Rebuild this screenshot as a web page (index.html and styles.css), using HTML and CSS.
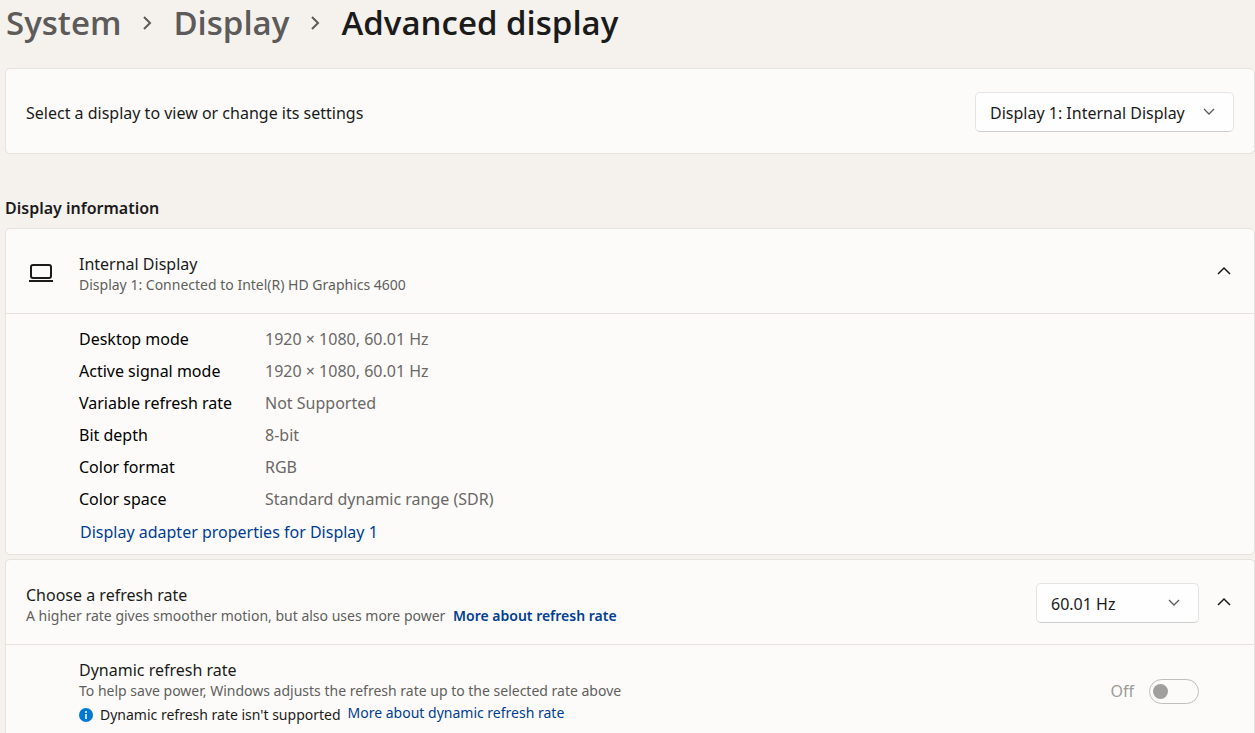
FILE: index.html
```html
<!DOCTYPE html>
<html lang="en">
<head>
  <meta charset="UTF-8">
  <meta name="viewport" content="width=device-width, initial-scale=1.0">
  <title>Advanced display</title>
  <link rel="stylesheet" href="styles.css">
</head>
<body>
  <nav class="breadcrumb" aria-label="Breadcrumb">
    <a href="#system">System</a>
    <svg class="crumb-arrow" viewBox="0 0 10 16"><path d="M2 2l6 6-6 6"/></svg>
    <a href="#display">Display</a>
    <svg class="crumb-arrow" viewBox="0 0 10 16"><path d="M2 2l6 6-6 6"/></svg>
    <h1>Advanced display</h1>
  </nav>

  <main>
    <section class="card">
      <div class="card-header picker">
        <label class="title" for="display">Select a display to view or change its settings</label>
        <div class="select-box">
          <select id="display">
            <option>Display 1: Internal Display</option>
          </select>
          <svg class="select-arrow" viewBox="0 0 12 12"><path d="M1 4l5 5 5-5"/></svg>
        </div>
      </div>
    </section>

    <h2>Display information</h2>

    <section class="card">
      <div class="card-header">
        <svg class="laptop" viewBox="0 0 26 20">
          <rect x="3" y="2" width="20" height="13" rx="2"/>
          <path d="M1 18h24"/>
        </svg>
        <div class="text">
          <p class="title">Internal Display</p>
          <p class="note">Display 1: Connected to Intel(R) HD Graphics 4600</p>
        </div>
        <button class="expander" aria-label="Collapse display details">
          <svg viewBox="0 0 16 16"><path d="M2 11l6-6 6 6"/></svg>
        </button>
      </div>
      <div class="card-body">
        <table class="info">
          <tr><th scope="row">Desktop mode</th><td>1920 × 1080, 60.01 Hz</td></tr>
          <tr><th scope="row">Active signal mode</th><td>1920 × 1080, 60.01 Hz</td></tr>
          <tr><th scope="row">Variable refresh rate</th><td>Not Supported</td></tr>
          <tr><th scope="row">Bit depth</th><td>8-bit</td></tr>
          <tr><th scope="row">Color format</th><td>RGB</td></tr>
          <tr><th scope="row">Color space</th><td>Standard dynamic range (SDR)</td></tr>
        </table>
        <a class="adapter-link" href="#adapter">Display adapter properties for Display 1</a>
      </div>
    </section>

    <section class="card">
      <div class="card-header">
        <div class="text">
          <label class="title" for="rate">Choose a refresh rate</label>
          <p class="note">A higher rate gives smoother motion, but also uses more power <a class="strong-link" href="#refresh-rate">More about refresh rate</a></p>
        </div>
        <div class="select-box rate">
          <select id="rate">
            <option>60.01 Hz</option>
          </select>
          <svg class="select-arrow" viewBox="0 0 12 12"><path d="M1 4l5 5 5-5"/></svg>
        </div>
        <button class="expander" aria-label="Collapse refresh rate options">
          <svg viewBox="0 0 16 16"><path d="M2 11l6-6 6 6"/></svg>
        </button>
      </div>
      <div class="card-body dynamic">
        <div class="text">
          <label class="title" for="dynamic-rate">Dynamic refresh rate</label>
          <p class="note">To help save power, Windows adjusts the refresh rate up to the selected rate above</p>
          <p class="status">
            <svg class="info-icon" viewBox="0 0 14 14">
              <circle cx="7" cy="7" r="7"/>
              <path d="M7 3v2M7 6v5"/>
            </svg>
            <span>Dynamic refresh rate isn't supported</span>
            <a href="#dynamic">More about dynamic refresh rate</a>
          </p>
        </div>
        <div class="switch">
          <span>Off</span>
          <input class="toggle" type="checkbox" role="switch" id="dynamic-rate" disabled>
        </div>
      </div>
    </section>
  </main>
</body>
</html>
```

FILE: styles.css
```css
* {
  box-sizing: border-box;
}

html {
  scrollbar-width: none;
}

body {
  margin: 0;
  padding: 0 0 0 5px;
  background: #f5f1ed;
  color: #1b1b1b;
  font-family: "Noto Sans", "Open Sans", sans-serif;
  font-size: 16px;
  line-height: 24px;
}

h1, h2, p {
  margin: 0;
}

a {
  color: #003e92;
  text-decoration: none;
}

svg {
  fill: none;
  stroke: currentColor;
  flex-shrink: 0;
}

.breadcrumb {
  display: flex;
  align-items: center;
  height: 46px;
  margin-bottom: 22px;
  padding-left: 1px;
  font-family: "Open Sans", sans-serif;
  font-size: 33px;
  font-weight: 600;
  line-height: 46px;
  color: #5d5b59;
}

.breadcrumb a {
  color: #5d5b59;
}

.breadcrumb h1 {
  font-size: 33px;
  font-weight: 600;
  color: #1b1b1b;
}

.crumb-arrow {
  width: 10px;
  height: 16px;
  margin: 0 21px;
  stroke-width: 2;
}

h2 {
  margin: 42px 0 8px;
  font-size: 16px;
  font-weight: 600;
  line-height: 24px;
}

.card {
  margin-bottom: 4px;
  background: #fcfbf9;
  border: 1px solid #e6e2de;
  border-radius: 5px;
}

.card:last-child {
  margin-bottom: 0;
}

.card-header {
  display: flex;
  align-items: center;
  min-height: 84px;
  padding: 2px 20px 0;
}

.text {
  flex: 1;
}

.card-header .text {
  padding-top: 4px;
}

.title {
  display: block;
  line-height: 22px;
}

.picker .title {
  flex: 1;
  padding-top: 2px;
}

.note {
  font-size: 14px;
  line-height: 20px;
  color: #605f5d;
}

.laptop {
  width: 26px;
  height: 20px;
  margin: 2px 25px 0 2px;
  stroke-width: 2;
}

.select-box {
  position: relative;
  width: 259px;
}

.select-box.rate {
  width: 163px;
  margin-right: 15px;
}

select {
  appearance: none;
  display: block;
  width: 100%;
  height: 40px;
  padding: 1px 36px 0 14px;
  border: 1px solid #e6e4e2;
  border-bottom-color: #cfcdcb;
  border-radius: 5px;
  background: #fefefe;
  color: #1b1b1b;
  font: inherit;
}

.select-arrow {
  position: absolute;
  top: 13px;
  right: 19px;
  width: 12px;
  height: 12px;
  color: #5d5b59;
  stroke-width: 1.3;
  pointer-events: none;
}

.expander {
  display: flex;
  width: 20px;
  height: 40px;
  padding: 0 0 2px;
  align-items: center;
  justify-content: center;
  border: 0;
  background: none;
  color: #1b1b1b;
}

.expander svg {
  width: 16px;
  height: 16px;
  stroke-width: 1.5;
}

.card-body {
  padding: 9px 20px 10px 73px;
  border-top: 1px solid #e6e2de;
}

.info {
  border-collapse: collapse;
  color: #000;
}

.info th, .info td {
  height: 32px;
  padding: 0;
  text-align: left;
  font-weight: 400;
}

.info th {
  width: 186px;
}

.info td {
  color: #6a6866;
}

.adapter-link {
  display: block;
  margin-top: 5px;
  padding-left: 1px;
}

.strong-link {
  margin-left: 4px;
  font-weight: 600;
}

.dynamic {
  display: flex;
  align-items: flex-start;
  padding: 14px 55px 10px 73px;
}

.status {
  display: flex;
  align-items: center;
  gap: 7px;
  font-size: 14px;
  line-height: 24px;
}

.status a {
  padding-bottom: 3px;
}

.info-icon {
  width: 14px;
  height: 14px;
  stroke: #fff;
  stroke-width: 1.5;
}

.info-icon circle {
  fill: #0078d4;
  stroke: none;
}

.switch {
  display: flex;
  align-items: center;
  gap: 15px;
  height: 64px;
  color: #9d9c9a;
}

.toggle {
  appearance: none;
  display: flex;
  align-items: center;
  width: 50px;
  height: 25px;
  margin: 0;
  padding: 0 3px;
  border: 1px solid #bfbebc;
  border-radius: 13px;
}

.toggle::before {
  content: "";
  width: 15px;
  height: 15px;
  border-radius: 50%;
  background: #a09f9d;
}
```
